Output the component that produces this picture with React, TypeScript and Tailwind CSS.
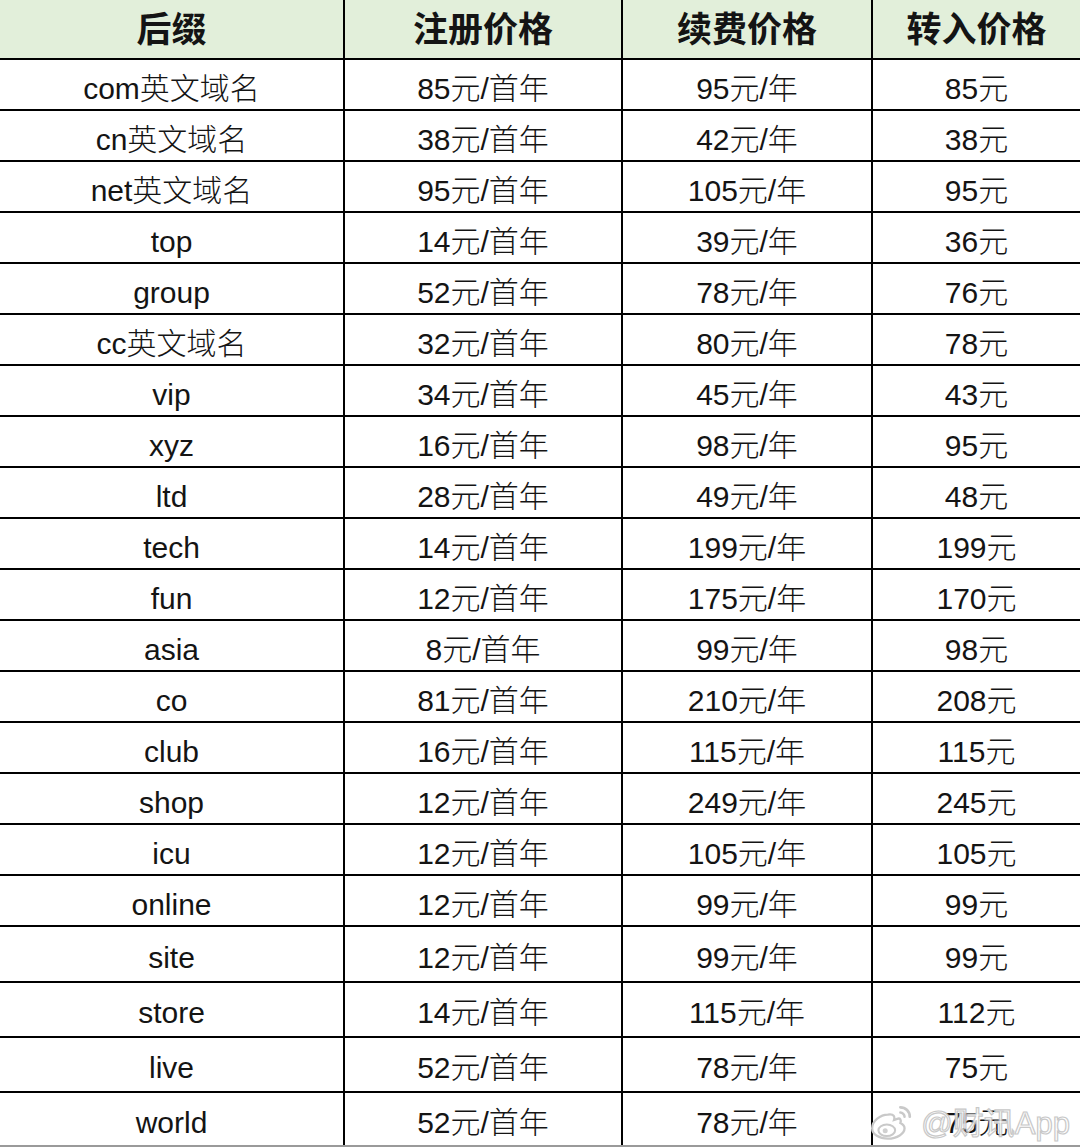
import React from "react";

const rows: [string, string, string, string][] = [
  ["com英文域名", "85元/首年", "95元/年", "85元"],
  ["cn英文域名", "38元/首年", "42元/年", "38元"],
  ["net英文域名", "95元/首年", "105元/年", "95元"],
  ["top", "14元/首年", "39元/年", "36元"],
  ["group", "52元/首年", "78元/年", "76元"],
  ["cc英文域名", "32元/首年", "80元/年", "78元"],
  ["vip", "34元/首年", "45元/年", "43元"],
  ["xyz", "16元/首年", "98元/年", "95元"],
  ["ltd", "28元/首年", "49元/年", "48元"],
  ["tech", "14元/首年", "199元/年", "199元"],
  ["fun", "12元/首年", "175元/年", "170元"],
  ["asia", "8元/首年", "99元/年", "98元"],
  ["co", "81元/首年", "210元/年", "208元"],
  ["club", "16元/首年", "115元/年", "115元"],
  ["shop", "12元/首年", "249元/年", "245元"],
  ["icu", "12元/首年", "105元/年", "105元"],
  ["online", "12元/首年", "99元/年", "99元"],
  ["site", "12元/首年", "99元/年", "99元"],
  ["store", "14元/首年", "115元/年", "112元"],
  ["live", "52元/首年", "78元/年", "75元"],
  ["world", "52元/首年", "78元/年", "75元"],
];

const heights = [
  "h-[51px]", "h-[51px]", "h-[51px]", "h-[51px]", "h-[51px]", "h-[51px]", "h-[51px]",
  "h-[51px]", "h-[51px]", "h-[51px]", "h-[51px]", "h-[51px]", "h-[51px]", "h-[51px]",
  "h-[51px]", "h-[51px]", "h-[51px]", "h-[56px]", "h-[55px]", "h-[55px]", "h-[54px]",
];

const font = { fontFamily: '"Liberation Sans", "Noto Sans CJK SC", sans-serif' };

function WeiboLogo() {
  return (
    <svg width="46" height="38" viewBox="0 0 44 36" fill="none">
      <path
        d="M18 10c-7 0-15 6-15 13 0 6 7 10 15 10 9 0 16-5 16-10 0-3-2-4-4-5 1-3 0-5-3-4l-3 1c1-3 0-6-6-5z"
        fill="#fff"
        stroke="#c9c9c9"
        strokeWidth="2.2"
      />
      <ellipse cx="17" cy="25" rx="8" ry="5.5" fill="#fff" stroke="#c9c9c9" strokeWidth="2" />
      <circle cx="15.5" cy="25.5" r="2.4" fill="#d0d0d0" />
      <path d="M30 3c5 0 9 4 9 9" stroke="#c9c9c9" strokeWidth="2.6" strokeLinecap="round" />
      <path d="M30 8c2 0 4 2 4 4" stroke="#c9c9c9" strokeWidth="2.4" strokeLinecap="round" />
    </svg>
  );
}

export default function App() {
  return (
    <div className="relative w-[1080px] h-[1148px] bg-white overflow-hidden text-[#141414]" style={font}>
      <div className="grid grid-cols-[345px_278px_250px_207px] h-[60px] bg-[#e2efda] border-b-2 border-black">
        {["后缀", "注册价格", "续费价格", "转入价格"].map((h, i) => (
          <div
            key={h}
            className={`flex items-center justify-center text-[35px] font-bold pt-[3px] ${i < 3 ? "border-r-2 border-black" : ""}`}
          >
            {h}
          </div>
        ))}
      </div>
      {rows.map((r, ri) => (
        <div
          key={ri}
          className={`grid grid-cols-[345px_278px_250px_207px] ${heights[ri]} ${ri === rows.length - 1 ? "border-b-2 border-[#9a9a9a]" : "border-b-2 border-black"}`}
        >
          {r.map((c, ci) => (
            <div
              key={ci}
              className={`flex items-center justify-center text-[30px] font-light pt-[6px] ${ci < 3 ? "border-r-2 border-black" : ""}`}
            >
              {c}
            </div>
          ))}
        </div>
      ))}
      <div className="absolute right-[10px] bottom-[6px] flex items-center gap-[6px]">
        <WeiboLogo />
        <span
          className="text-[31px] text-white leading-none"
          style={{ WebkitTextStroke: "1.2px #c4c4c4", opacity: 0.92 }}
        >
          @财讯App
        </span>
      </div>
    </div>
  );
}
